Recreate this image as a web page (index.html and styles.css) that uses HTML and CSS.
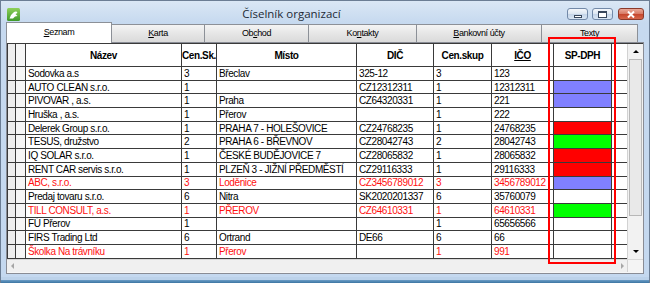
FILE: index.html
```html
<!DOCTYPE html>
<html lang="cs">
<head>
    <meta charset="UTF-8">
    <title>Číselník organizací</title>
    <link rel="stylesheet" href="styles.css">
</head>
<body>
<div class="window">
    <div class="titlebar">
        <svg class="app-icon" width="13" height="13" viewBox="0 0 13 13">
            <defs>
                <linearGradient id="ig" x1="0" y1="0" x2="0" y2="1">
                    <stop offset="0" stop-color="#8fd05a"/>
                    <stop offset="1" stop-color="#3f9a2a"/>
                </linearGradient>
            </defs>
            <rect x="0" y="0" width="13" height="13" rx="1.5" fill="url(#ig)"/>
            <path d="M2.5 10.5 L4 7 L6.5 4.5 Q8 3 9.5 3.5 L10.5 5 L8.5 6 L10.5 8 L8 8.5 L6 10.5 Z" fill="#fff"/>
        </svg>
        <div class="title">Číselník organizací</div>
        <div class="controls">
            <span class="ctl"><span class="g-min"></span></span>
            <span class="ctl"><span class="g-max"></span></span>
            <span class="ctl close">
                <svg width="8" height="7" viewBox="0 0 8 7"><path d="M1 0.5 L7 6.5 M7 0.5 L1 6.5" stroke="#fff" stroke-width="2"/></svg>
            </span>
        </div>
    </div>

    <div class="client">
        <div class="tabs">
            <div class="tab active" style="width:106px"><u>S</u>eznam</div>
            <div class="tab" style="width:94px"><u>K</u>arta</div>
            <div class="tab" style="width:105px">Ob<u>c</u>hod</div>
            <div class="tab" style="width:109px">Ko<u>n</u>takty</div>
            <div class="tab" style="width:126px"><u>B</u>ankovní účty</div>
            <div class="tab" style="width:97px">Te<u>x</u>ty</div>
        </div>

        <div class="page">
            <div class="grid">
                <div class="cells">
                    <div class="row head">
                        <span class="c ind"></span><span class="c ind2"></span>
                        <span class="c">Název</span>
                        <span class="c">Cen.Sk.</span>
                        <span class="c">Místo</span>
                        <span class="c">DIČ</span>
                        <span class="c">Cen.skup</span>
                        <span class="c"><u>IČO</u></span>
                        <span class="c">SP-DPH</span>
                        <span class="c end"></span>
                    </div>
                    <div class="row">
                        <span class="c ind"></span><span class="c ind2"></span>
                        <span class="c">Sodovka a.s</span><span class="c">3</span><span class="c">Břeclav</span><span class="c">325-12</span><span class="c">3</span><span class="c">123</span>
                        <span class="c dph"></span><span class="c end"></span>
                    </div>
                    <div class="row">
                        <span class="c ind"></span><span class="c ind2"></span>
                        <span class="c">AUTO CLEAN s.r.o.</span><span class="c">1</span><span class="c"></span><span class="c">CZ12312311</span><span class="c">1</span><span class="c">12312311</span>
                        <span class="c dph blue"></span><span class="c end"></span>
                    </div>
                    <div class="row">
                        <span class="c ind"></span><span class="c ind2"></span>
                        <span class="c">PIVOVAR , a.s.</span><span class="c">1</span><span class="c">Praha</span><span class="c">CZ64320331</span><span class="c">1</span><span class="c">221</span>
                        <span class="c dph blue"></span><span class="c end"></span>
                    </div>
                    <div class="row">
                        <span class="c ind"></span><span class="c ind2"></span>
                        <span class="c">Hruška , a.s.</span><span class="c">1</span><span class="c">Přerov</span><span class="c"></span><span class="c">1</span><span class="c">222</span>
                        <span class="c dph"></span><span class="c end"></span>
                    </div>
                    <div class="row">
                        <span class="c ind"></span><span class="c ind2"></span>
                        <span class="c">Delerek Group s.r.o.</span><span class="c">1</span><span class="c">PRAHA 7 - HOLEŠOVICE</span><span class="c">CZ24768235</span><span class="c">1</span><span class="c">24768235</span>
                        <span class="c dph red"></span><span class="c end"></span>
                    </div>
                    <div class="row">
                        <span class="c ind"></span><span class="c ind2"></span>
                        <span class="c">TESUS, družstvo</span><span class="c">2</span><span class="c">PRAHA 6 - BŘEVNOV</span><span class="c">CZ28042743</span><span class="c">2</span><span class="c">28042743</span>
                        <span class="c dph green"></span><span class="c end"></span>
                    </div>
                    <div class="row">
                        <span class="c ind"></span><span class="c ind2"></span>
                        <span class="c">IQ SOLAR s.r.o.</span><span class="c">1</span><span class="c">ČESKÉ BUDĚJOVICE 7</span><span class="c">CZ28065832</span><span class="c">1</span><span class="c">28065832</span>
                        <span class="c dph red"></span><span class="c end"></span>
                    </div>
                    <div class="row">
                        <span class="c ind"></span><span class="c ind2"></span>
                        <span class="c">RENT CAR servis s.r.o.</span><span class="c">1</span><span class="c">PLZEŇ 3 - JIŽNÍ PŘEDMĚSTÍ</span><span class="c">CZ29116333</span><span class="c">1</span><span class="c">29116333</span>
                        <span class="c dph red"></span><span class="c end"></span>
                    </div>
                    <div class="row alert">
                        <span class="c ind"></span><span class="c ind2"></span>
                        <span class="c">ABC, s.r.o.</span><span class="c">3</span><span class="c">Loděnice</span><span class="c">CZ3456789012</span><span class="c">3</span><span class="c">3456789012</span>
                        <span class="c dph blue"></span><span class="c end"></span>
                    </div>
                    <div class="row">
                        <span class="c ind"></span><span class="c ind2"></span>
                        <span class="c">Predaj tovaru s.r.o.</span><span class="c">6</span><span class="c">Nitra</span><span class="c">SK2020201337</span><span class="c">6</span><span class="c">35760079</span>
                        <span class="c dph"></span><span class="c end"></span>
                    </div>
                    <div class="row alert">
                        <span class="c ind"></span><span class="c ind2"></span>
                        <span class="c">TILL CONSULT, a.s.</span><span class="c">1</span><span class="c">PŘEROV</span><span class="c">CZ64610331</span><span class="c">1</span><span class="c">64610331</span>
                        <span class="c dph green"></span><span class="c end"></span>
                    </div>
                    <div class="row">
                        <span class="c ind"></span><span class="c ind2"></span>
                        <span class="c">FÚ Přerov</span><span class="c">1</span><span class="c"></span><span class="c"></span><span class="c">1</span><span class="c">65656566</span>
                        <span class="c dph"></span><span class="c end"></span>
                    </div>
                    <div class="row">
                        <span class="c ind"></span><span class="c ind2"></span>
                        <span class="c">FIRS Trading Ltd</span><span class="c">6</span><span class="c">Ortrand</span><span class="c">DE66</span><span class="c">6</span><span class="c">66</span>
                        <span class="c dph"></span><span class="c end"></span>
                    </div>
                    <div class="row alert">
                        <span class="c ind"></span><span class="c ind2"></span>
                        <span class="c">Školka Na trávníku</span><span class="c">1</span><span class="c">Přerov</span><span class="c"></span><span class="c">1</span><span class="c">991</span>
                        <span class="c dph"></span><span class="c end"></span>
                    </div>
                </div>

                <div class="vscroll">
                    <div class="sbtn"><span class="arr-up"></span></div>
                    <div class="thumb"></div>
                    <div class="track"></div>
                    <div class="sbtn"><span class="arr-down"></span></div>
                </div>

                <!-- highlight round the SP-DPH column -->
                <div class="mark"></div>
            </div>

            <div class="hscroll">
                <div class="hbtn"><span class="arr-left"></span></div>
                <div class="htrack"></div>
                <div class="hbtn"><span class="arr-right"></span></div>
                <div class="corner"></div>
            </div>
        </div>
    </div>

    <div class="frame-bottom"></div>
</div>
</body>
</html>
```

FILE: styles.css
```css
* {
    box-sizing: border-box;
}

body {
    margin: 0;
    width: 650px;
    height: 283px;
    overflow: hidden;
    font-family: "Liberation Sans", Arial, sans-serif;
    color: #000000;
}

.window {
    height: 283px;
    display: flex;
    flex-direction: column;
    border: 1px solid #6b7d94;
    border-bottom: 0;
    background: linear-gradient(#dae7f5, #c6d9ef 22px, #c4d8ef);
}

/* title bar */
.titlebar {
    height: 20px;
    display: flex;
    align-items: flex-start;
    flex-shrink: 0;
}

.app-icon {
    margin: 7px 0 0 6px;
}

.title {
    flex: 1;
    text-align: center;
    font-family: "Open Sans", sans-serif;
    font-size: 11.5px;
    line-height: 14px;
    padding-top: 6px;
    color: #1e2a36;
}

.controls {
    display: flex;
    margin: 7px 5px 0 0;
}

.ctl {
    width: 21px;
    height: 12px;
    margin-left: 4px;
    border: 1px solid #7289a8;
    border-radius: 3px;
    background: linear-gradient(#f4f7fb, #dbe5f1 50%, #c4d4e8 51%, #d8e5f4);
    display: flex;
    align-items: center;
    justify-content: center;
}

.ctl.close {
    width: 26px;
    margin-left: 5px;
    border-color: #8b3a2b;
    background: linear-gradient(#eaa999, #d77862 50%, #c5452c 51%, #d5664a);
}

.g-min {
    width: 8px;
    height: 3px;
    margin-top: 4px;
    background: #ffffff;
    border: 1px solid #38475c;
}

.g-max {
    width: 9px;
    height: 7px;
    border: 1px solid #38475c;
    border-top-width: 2px;
    background: #ffffff;
    box-shadow: inset 0 0 0 1px #ffffff;
}

/* tabs */
.client {
    padding: 0 5px 3px;
    display: flex;
    flex-direction: column;
}

.tabs {
    height: 21px;
    display: flex;
    align-items: flex-end;
    font-size: 9px;
    letter-spacing: -0.4px;
}

.tab {
    height: 18px;
    flex-shrink: 0;
    margin-right: -1px;
    border: 1px solid #8c9097;
    border-bottom: 0;
    background: linear-gradient(#f4f4f4, #e6e6e6 50%, #dadada);
    text-align: center;
    line-height: 16px;
}

.tab.active {
    height: 21px;
    margin-bottom: -1px;
    background: #ffffff;
    position: relative;
    z-index: 1;
    line-height: 19px;
}

.page {
    height: 232px;
    border: 1px solid #898c95;
    background: #f6f6f6;
}

/* data grid */
.grid {
    position: relative;
    display: flex;
    border-top: 1px solid #3a3a3a;
    border-left: 1px solid #3a3a3a;
}

.cells {
    width: 619px;
    background: #ffffff;
}

.row {
    display: grid;
    grid-template-columns: 8px 10px 156px 35px 140px 77px 58px 62px 58px 15px;
    height: 13.7px;
    font-size: 10px;
    letter-spacing: -0.4px;
}

.row.head {
    height: 23px;
    font-weight: bold;
}

.c {
    border-right: 1px solid #3a3a3a;
    border-bottom: 1px solid #3a3a3a;
    padding-left: 2px;
    white-space: nowrap;
    overflow: hidden;
    display: flex;
    align-items: center;
    line-height: 11px;
}

.head .c {
    justify-content: center;
    padding-left: 0;
}

.c.ind {
    background: #eeeeee;
}

.c.ind2 {
    background: #f6f6f6;
}

.c.end {
    border-right: 0;
}

.alert {
    color: #ff1010;
}

.dph.blue {
    background: #8080ff;
}

.dph.red {
    background: #ff0000;
}

.dph.green {
    background: #00ff00;
}

.mark {
    position: absolute;
    left: 540px;
    top: -7px;
    width: 68px;
    height: 227px;
    border: 2px solid #ff0000;
    z-index: 2;
}

/* scroll bars */
.vscroll {
    width: 16px;
    display: flex;
    flex-direction: column;
    background: #f2f2f2;
    border-left: 1px solid #d2d2d2;
}

.sbtn {
    height: 15px;
    display: flex;
    align-items: center;
    justify-content: center;
}

.thumb {
    height: 157px;
    margin: 0 1px;
    border: 1px solid #b8b8b8;
    background: #e9e9e9;
}

.track {
    flex: 1;
}

.arr-up,
.arr-down {
    width: 0;
    height: 0;
    border-left: 3px solid transparent;
    border-right: 3px solid transparent;
}

.arr-up {
    border-bottom: 3px solid #000000;
}

.arr-down {
    border-top: 3px solid #000000;
}

.hscroll {
    height: 13px;
    display: flex;
    background: #f0f0f0;
    border-top: 1px solid #d8d8d8;
}

.hbtn {
    width: 10px;
    display: flex;
    align-items: center;
    justify-content: center;
}

.htrack {
    flex: 1;
}

.arr-left,
.arr-right {
    width: 0;
    height: 0;
    border-top: 3px solid transparent;
    border-bottom: 3px solid transparent;
}

.arr-left {
    border-right: 3px solid #a6a6a6;
}

.arr-right {
    border-left: 3px solid #a6a6a6;
}

.corner {
    width: 16px;
    border-left: 1px solid #d2d2d2;
    background: #f4f4f4;
}

.frame-bottom {
    flex: 1;
    background: linear-gradient(#bcd2ea 0 3px, #6b9cc6 3px, #3b75a2);
}
```
